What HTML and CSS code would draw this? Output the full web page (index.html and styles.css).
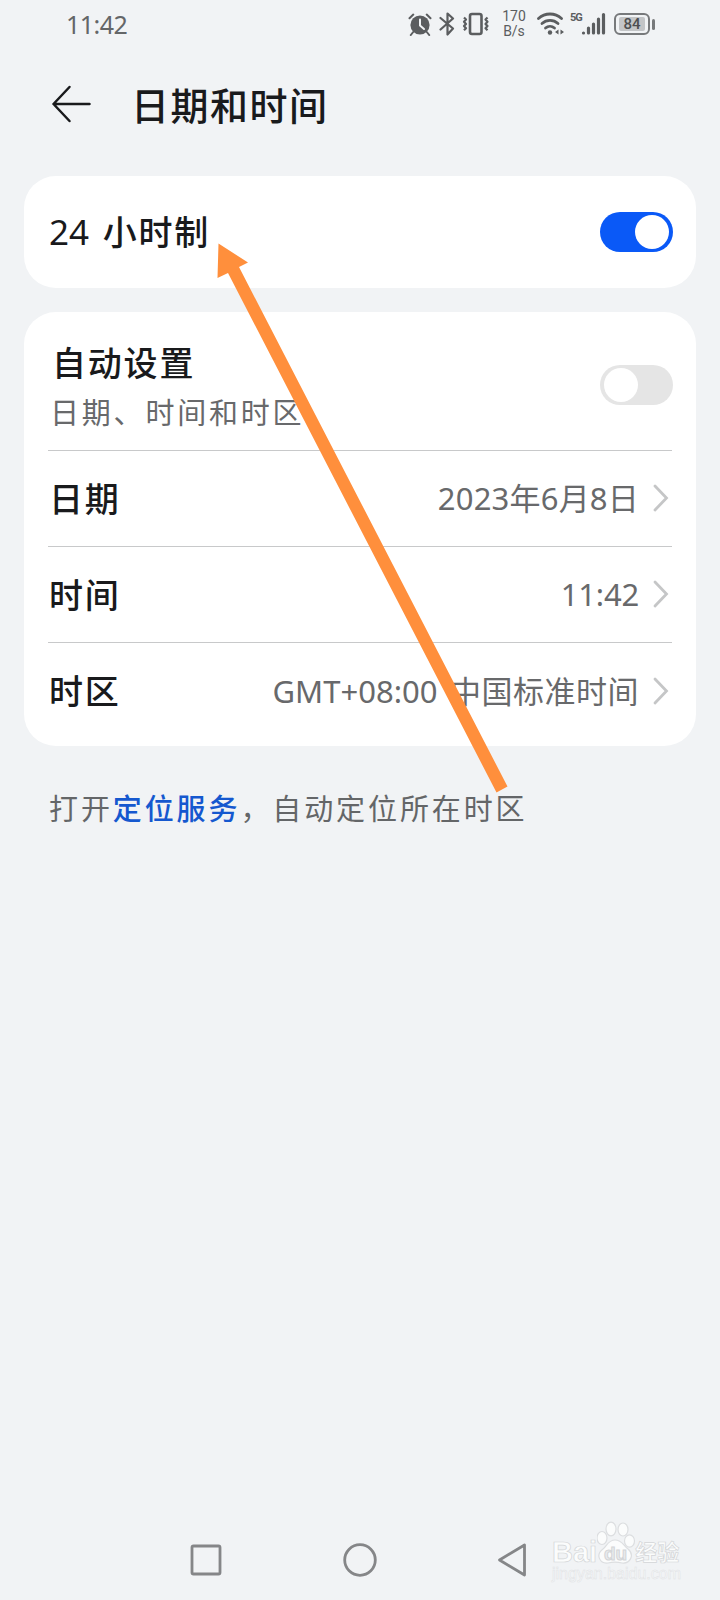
FILE: index.html
```
<!DOCTYPE html>
<html lang="zh-CN">

<head>
    <meta charset="UTF-8">
    <meta name="viewport" content="width=device-width, initial-scale=1.0">
    <title>日期和时间</title>
    <link rel="stylesheet" href="styles.css">
</head>

<body>
    <div class="screen">
        <div class="status-bar">
            <span class="clock">11:42</span>
            <div class="status-icons">
                <svg class="icon-alarm" width="24" height="24" viewBox="0 0 24 24">
                    <circle cx="12" cy="13" r="9.6" fill="#5b5d5f" />
                    <path d="M1.5 6.2 5.3 2.6M22.5 6.2 18.7 2.6M5.2 20 2.8 23M18.8 20l2.4 3" fill="none" stroke="#5b5d5f" stroke-width="2" stroke-linecap="round" />
                    <path d="M12 7.5v6l4 3.5" fill="none" stroke="#f1f3f5" stroke-width="2" stroke-linecap="round" stroke-linejoin="round" />
                </svg>
                <svg class="icon-bluetooth" width="16" height="26" viewBox="0 0 16 26">
                    <path d="M1.5 7 14 17.5 8.5 23.5v-21L14 7.5 1.5 18.5" fill="none" stroke="#5b5d5f" stroke-width="2.2" stroke-linecap="round" stroke-linejoin="round" />
                </svg>
                <svg class="icon-vibrate" width="28" height="24" viewBox="0 0 28 24">
                    <rect x="8" y="2" width="11.5" height="20" rx="2" fill="none" stroke="#5b5d5f" stroke-width="2.6" />
                    <path d="M2 5.5l2 2-2 2.2 2 2.2-2 2.2 2 2.2-2 2M25.5 5.5l-2 2 2 2.2-2 2.2 2 2.2-2 2.2 2 2" fill="none" stroke="#5b5d5f" stroke-width="2.2" stroke-linejoin="round" />
                </svg>
                <div class="net-speed"><span>170</span><span>B/s</span></div>
                <svg class="icon-wifi" width="28" height="24" viewBox="0 0 28 24">
                    <g fill="none" stroke="#5b5d5f" stroke-width="2.8" stroke-linecap="round">
                        <path d="M1.5 6.5a17 17 0 0 1 23 0" />
                        <path d="M5 11.5a12 12 0 0 1 16 0" />
                        <path d="M8.5 16a7 7 0 0 1 9 0" />
                    </g>
                    <circle cx="13" cy="20.5" r="2.2" fill="#5b5d5f" />
                    <path d="M21.5 17.5v5L18 20zM23.5 17.5v5L27 20z" fill="#5b5d5f" />
                </svg>
                <div class="signal">
                    <span class="net-type">5G</span>
                    <svg width="25" height="24" viewBox="0 0 25 24">
                        <path d="M2.5 21v0M7.5 21v-5M12.5 21v-9M17.5 21V7M22.5 21V2.5" fill="none" stroke="#5b5d5f" stroke-width="3.2" stroke-linecap="round" />
                    </svg>
                </div>
                <div class="battery">
                    <div class="battery-body"><span class="battery-level">84</span></div>
                    <div class="battery-cap"></div>
                </div>
            </div>
        </div>

        <header class="header">
            <svg class="back" width="40" height="38" viewBox="0 0 40 38">
                <path d="M18.5 2 2.5 19l16 17M2.500 19h36" fill="none" stroke="#191a1c" stroke-width="2.5" stroke-linecap="round" stroke-linejoin="round" />
            </svg>
            <h1>日期和时间</h1>
        </header>

        <main>
            <section class="card">
                <div class="row row-single">
                    <span class="label"><span class="num">24</span> 小时制</span>
                    <span class="switch on"></span>
                </div>
            </section>

            <section class="card">
                <div class="row row-auto">
                    <div class="label-group">
                        <span class="label">自动设置</span>
                        <span class="sub">日期、时间和时区</span>
                    </div>
                    <span class="switch"></span>
                </div>
                <div class="row">
                    <span class="label">日期</span>
                    <span class="value">2023年6月8日</span>
                    <svg class="chevron" width="16" height="28" viewBox="0 0 16 28"><path d="M2 2 13.5 14 2 26" /></svg>
                </div>
                <div class="row">
                    <span class="label">时间</span>
                    <span class="value time">11:42</span>
                    <svg class="chevron" width="16" height="28" viewBox="0 0 16 28"><path d="M2 2 13.5 14 2 26" /></svg>
                </div>
                <div class="row">
                    <span class="label">时区</span>
                    <span class="value zone"><span class="gmt">GMT+08:00</span> 中国标准时间</span>
                    <svg class="chevron" width="16" height="28" viewBox="0 0 16 28"><path d="M2 2 13.5 14 2 26" /></svg>
                </div>
            </section>

            <p class="tip">打开<a>定位服务</a>，自动定位所在时区</p>
        </main>

        <nav class="nav-bar">
            <svg width="34" height="34" viewBox="0 0 34 34"><rect x="3" y="3" width="28" height="28" rx="1.5" /></svg>
            <svg width="34" height="34" viewBox="0 0 34 34"><circle cx="17" cy="17" r="15.3" /></svg>
            <svg width="34" height="34" viewBox="0 0 34 34"><path d="M2.5 17 27.5 2v30z" /></svg>
        </nav>

        <!-- pointer to the 24h switch label -->
        <svg class="arrow" width="720" height="820" viewBox="0 0 720 820">
            <path d="M218.5 243.5 248 262.5 239 267 507.500 786.500 496.500 792.500 228 273 217.500 278z" />
        </svg>

        <div class="watermark">
            <div class="wm-logo">
                <span class="wm-bai">Bai</span>
                <svg width="40" height="44" viewBox="0 0 40 44">
                    <g fill="#fbfcfc" stroke="#dcdee0" stroke-width="1.2">
                        <ellipse cx="5" cy="17" rx="5" ry="6.5" />
                        <ellipse cx="14" cy="8" rx="5" ry="6.8" />
                        <ellipse cx="26" cy="8.5" rx="5" ry="6.5" />
                        <ellipse cx="32.500" cy="20" rx="5" ry="6.2" />
                        <path d="M18 19c-7 0-8 6-12 9-8 6-3 15 5 14 4-1 10-1 14 0 8 1 13-8 6-14-5-4-6-9-13-9z" />
                    </g>
                    <text x="18.5" y="39" text-anchor="middle">du</text>
                </svg>
                <span class="wm-cn">经验</span>
            </div>
            <div class="wm-url">jingyan.baidu.com</div>
        </div>
    </div>
</body>

</html>
```
FILE: styles.css
```
* {
    box-sizing: border-box;
}

body {
    margin: 0;
    background-color: #f1f3f5;
    font-family: "Noto Sans", "Noto Sans CJK SC", sans-serif;
    color: #191a1c;
}

.screen {
    position: relative;
    display: flex;
    flex-direction: column;
    width: 720px;
    height: 1600px;
    overflow: hidden;
}

/* status bar */
.status-bar {
    display: flex;
    justify-content: space-between;
    align-items: center;
    height: 48px;
    padding: 0 65px 0 66px;
}

.clock {
    font-size: 25px;
    letter-spacing: -0.5px;
    color: #646668;
}

.status-icons {
    display: flex;
    align-items: center;
}

.icon-bluetooth {
    margin-left: 7px;
}

.icon-vibrate {
    margin-left: 7px;
}

.net-speed {
    display: flex;
    flex-direction: column;
    align-items: center;
    width: 26px;
    margin-left: 11px;
    font-family: Roboto, sans-serif;
    font-size: 14px;
    line-height: 15px;
    color: #5b5d5f;
}

.icon-wifi {
    margin-left: 10px;
}

.signal {
    display: flex;
    align-items: flex-start;
    margin-left: 5px;
}

.net-type {
    width: 11px;
    font-family: Roboto, sans-serif;
    font-size: 11px;
    font-weight: bold;
    letter-spacing: -1px;
    line-height: 12px;
    color: #5b5d5f;
}

.battery {
    display: flex;
    align-items: center;
    gap: 2px;
    margin-left: 8px;
}

.battery-body {
    width: 36px;
    height: 22px;
    padding: 2px;
    border: 2px solid #77797b;
    border-radius: 6px;
}

.battery-level {
    display: block;
    width: 26px;
    height: 14px;
    margin-left: 1px;
    background: #c3c5c7;
    border-radius: 2px;
    font-family: Roboto, sans-serif;
    font-size: 15px;
    font-weight: 500;
    line-height: 14px;
    text-align: center;
    color: #4d4f51;
}

.battery-cap {
    width: 3px;
    height: 11px;
    background: #77797b;
    border-radius: 2px;
}

/* title */
.header {
    display: flex;
    align-items: center;
    height: 112px;
    padding: 0 51px;
}

.back {
    margin-bottom: 1px;
}

h1 {
    margin: 2px 0 0 40px;
    font-size: 38px;
    font-weight: 500;
    letter-spacing: 1.5px;
    line-height: 56px;
}

/* cards */
main {
    flex: 1;
    padding: 16px 24px 0;
}

.card {
    padding: 0 24px;
    margin-bottom: 24px;
    background: #fff;
    border-radius: 32px;
}

.card:nth-of-type(2) {
    height: 434px;
}

.row {
    display: flex;
    align-items: center;
    height: 96px;
    border-bottom: 1px solid #c8c9ca;
}

.row:last-child {
    border-bottom: none;
}

.row-single {
    height: 112px;
}

.row-auto {
    height: 139px;
    padding-top: 8px;
}

.label {
    padding-left: 1px;
    font-size: 34px;
    font-weight: 500;
    letter-spacing: 1.8px;
    line-height: 52px;
}

.num {
    margin-right: 3px;
    font-size: 35px;
    font-weight: 400;
    letter-spacing: 0;
}

.label-group {
    display: flex;
    flex-direction: column;
    padding-top: 4px;
}

.label-group .label {
    padding-left: 4px;
}

.sub {
    padding-left: 2px;
    font-size: 29px;
    letter-spacing: 2.8px;
    line-height: 48px;
    color: #68696b;
}

.value {
    margin-left: auto;
    padding-bottom: 4px;
    font-size: 31px;
    letter-spacing: 0.2px;
    color: #68696b;
}

.value.time {
    padding-bottom: 1px;
    letter-spacing: -0.2px;
}

.value.zone {
    letter-spacing: 0.5px;
    word-spacing: 4px;
}

.gmt {
    letter-spacing: 0;
}

.chevron {
    margin: 0 3px 1px 14px;
    fill: none;
    stroke: #c5c6c7;
    stroke-width: 2.8;
    stroke-linecap: round;
}

.switch {
    display: flex;
    width: 73px;
    height: 40px;
    padding: 3px 4px;
    margin: 0 -1px 0 auto;
    background: #e5e5e5;
    border-radius: 20px;
}

.switch::before {
    content: "";
    width: 34px;
    height: 34px;
    background: #fff;
    border-radius: 50%;
}

.switch.on {
    justify-content: flex-end;
    background: #0a59f7;
}

.tip {
    margin: 39px 0 0;
    padding-left: 25px;
    font-size: 29px;
    letter-spacing: 2.9px;
    line-height: 48px;
    color: #646668;
}

.tip a {
    font-weight: 500;
    color: #1558cf;
}

/* system navigation */
.nav-bar {
    display: flex;
    justify-content: center;
    gap: 120px;
    height: 57px;
}

.nav-bar svg {
    fill: none;
    stroke: #858688;
    stroke-width: 2.8;
    stroke-linejoin: round;
}

.arrow {
    position: absolute;
    top: 0;
    left: 0;
    fill: #ff8f3c;
}

.watermark {
    position: absolute;
    left: 552px;
    top: 1521px;
    width: 130px;
    color: #fbfcfc;
    -webkit-text-stroke: 0.7px #d3d5d7;
}

.wm-logo {
    display: flex;
    align-items: flex-end;
    height: 44px;
}

.wm-bai {
    font-family: "Liberation Sans", sans-serif;
    font-size: 29px;
    font-weight: bold;
    line-height: 26px;
}

.wm-logo svg {
    flex: none;
}

.wm-logo text {
    font-family: "Liberation Sans", sans-serif;
    font-size: 19px;
    font-weight: bold;
    fill: #e9ebed;
    stroke: #d3d5d7;
}

.wm-cn {
    margin-left: -2px;
    font-size: 22px;
    font-weight: bold;
    line-height: 28px;
    white-space: nowrap;
}

.wm-url {
    font-family: "Liberation Sans", sans-serif;
    font-size: 16px;
    line-height: 18px;
    color: #f8f9fa;
    -webkit-text-stroke: 0.5px #e0e2e4;
}
```
